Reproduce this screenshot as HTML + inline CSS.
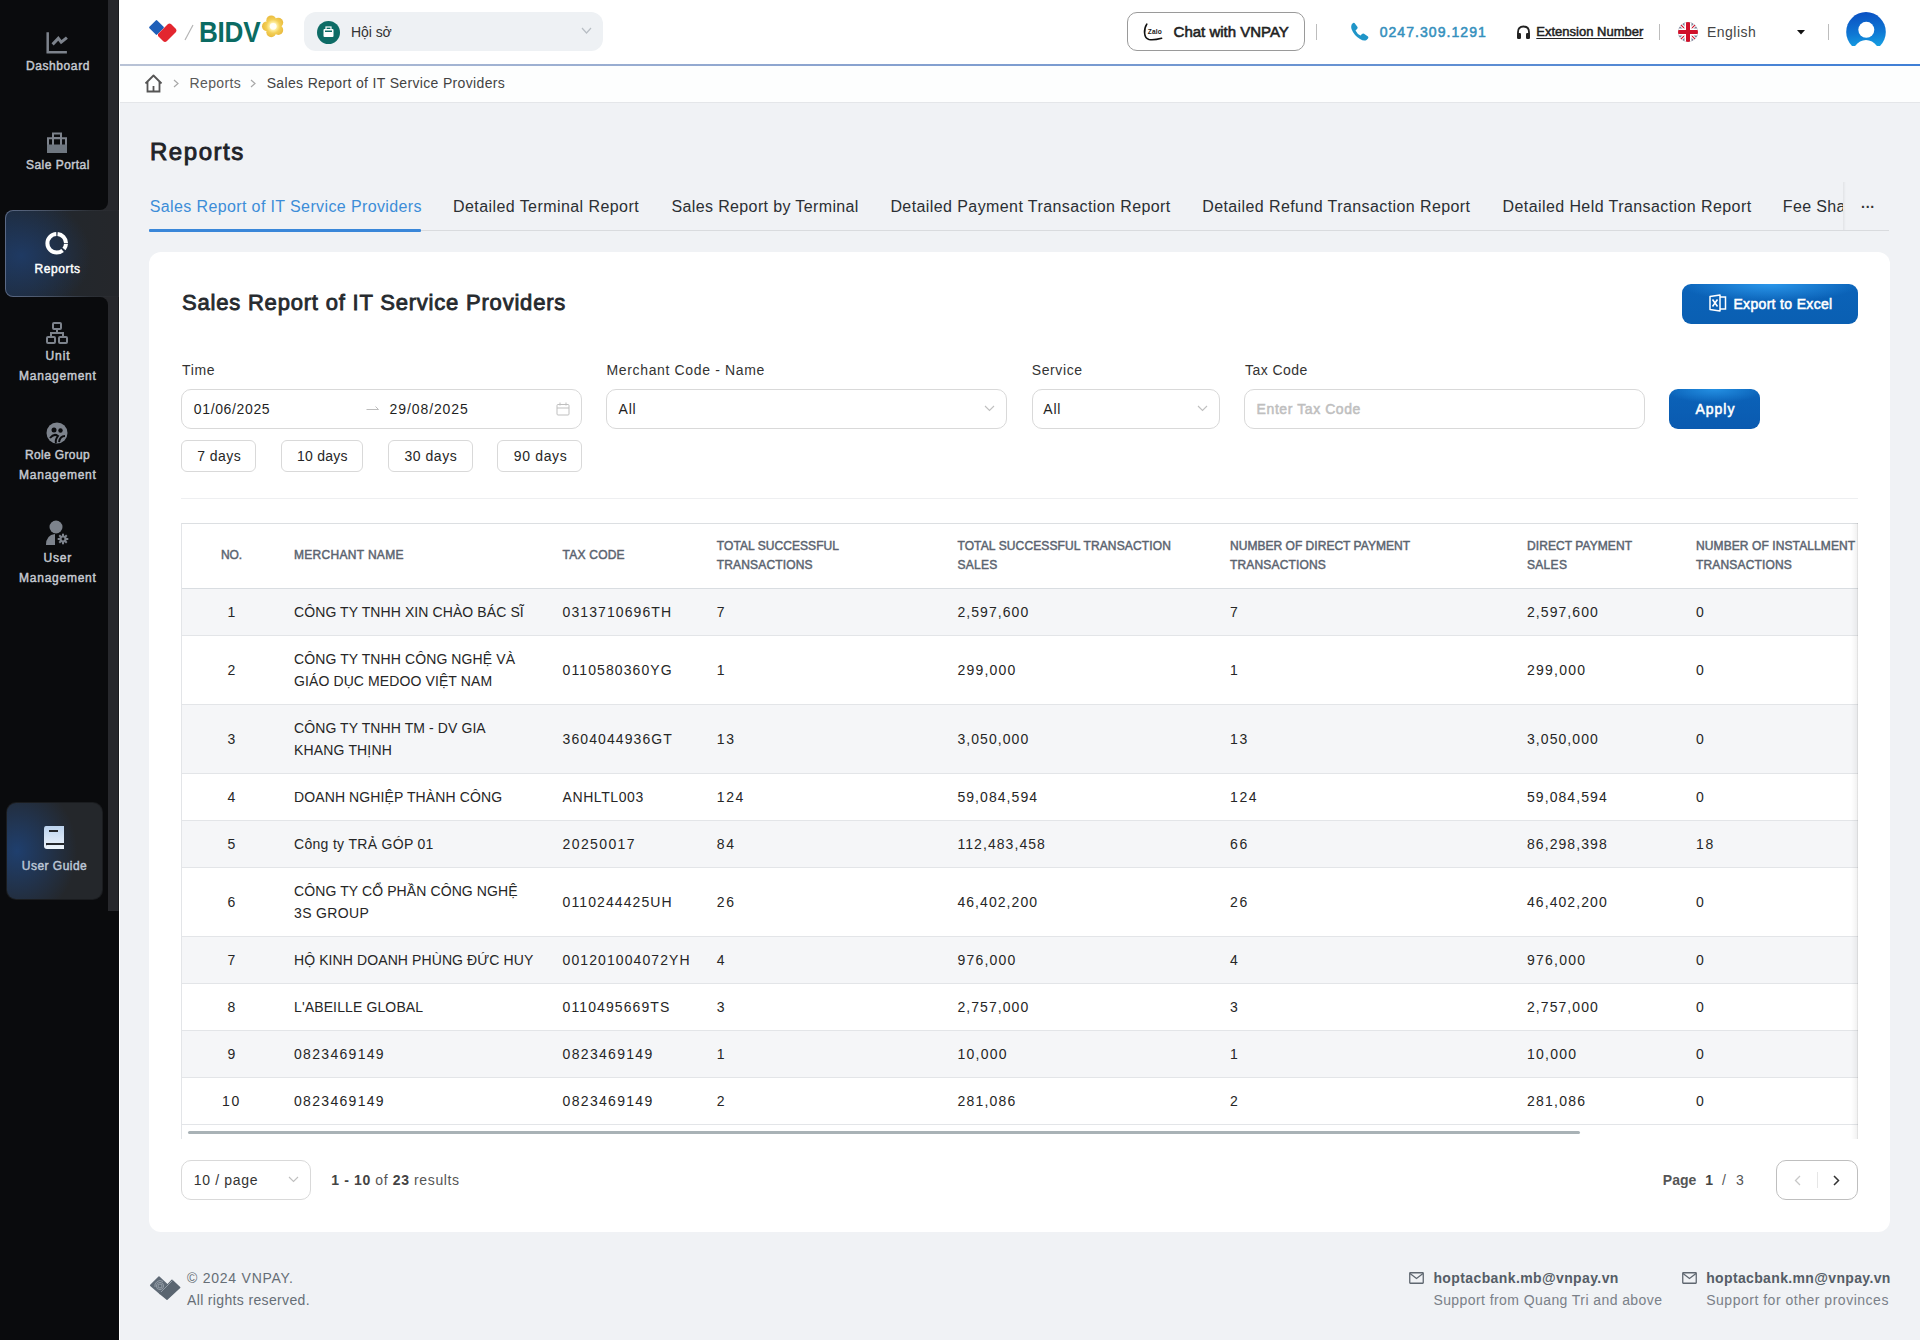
<!DOCTYPE html>
<html><head><meta charset="utf-8"><title>Sales Report of IT Service Providers</title>
<style>
html,body{margin:0;padding:0;overflow:hidden;}
body{width:1920px;height:1340px;position:relative;overflow:hidden;font-family:"Liberation Sans", sans-serif;background:#f0f2f5;}
.t{position:absolute;white-space:nowrap;}
svg{overflow:visible;}
</style></head><body>
<div style="position:absolute;left:0px;top:0px;width:1920px;height:1340px;background:#f0f2f5;"></div>
<div style="position:absolute;left:119px;top:0px;width:1801px;height:64px;background:#ffffff;"></div>
<div style="position:absolute;left:119px;top:64px;width:1801px;height:2px;background:linear-gradient(90deg,#b9c3d6 0%,#8aa3cf 40%,#3f7fd6 100%);"></div>
<div style="position:absolute;left:119px;top:66px;width:1801px;height:36px;background:#fdfefe;"></div>
<div style="position:absolute;left:119px;top:102px;width:1801px;height:1px;background:#e4e6e9;"></div>
<div style="position:absolute;left:119px;top:0px;width:1px;height:1340px;background:#ffffff;"></div>
<div style="position:absolute;left:0px;top:0px;width:119px;height:1340px;background:#0a0b0d;"></div>
<div style="position:absolute;left:0px;top:0px;width:119px;height:911px;background:#27282c;"></div>
<div style="position:absolute;left:118px;top:0px;width:1px;height:911px;background:#1b1c1f;"></div>
<div style="position:absolute;left:0px;top:0px;width:108px;height:210px;background:#0a0b0d;border-bottom-right-radius:8px;"></div>
<div style="position:absolute;left:0px;top:297px;width:108px;height:614px;background:#0a0b0d;border-top-right-radius:8px;border-bottom-right-radius:0;"></div>
<div style="position:absolute;left:0px;top:205px;width:40px;height:97px;background:#0a0b0d;"></div>
<div style="position:absolute;left:5px;top:210px;width:114px;height:87px;border-radius:8px 0 0 8px;background:linear-gradient(90deg,#5a6986 0%,#4a5568 35%,#2c3036 75%,#27282c 100%);"></div>
<div style="position:absolute;left:6px;top:211px;width:113px;height:85px;border-radius:7px 0 0 7px;background:radial-gradient(ellipse 70px 60px at 15px 45px,#1f3a63 0%,rgba(31,58,99,0) 100%),linear-gradient(90deg,#1e2a3a 0%,#23272c 60%,#25272b 100%);"></div>
<div style="position:absolute;left:7px;top:803px;width:95px;height:96px;border-radius:9px;background:radial-gradient(ellipse 60px 70px at 10px 48px,#1f3f6e 0%,rgba(31,63,110,0) 100%),#24272b;box-shadow:0 0 0 1px #1a1c1f;"></div>
<svg style="position:absolute;left:46px;top:32px" width="24" height="22" viewBox="0 0 24 22"><path d="M1.7 0.3 V20.2 H20.9" stroke="#7d838c" stroke-width="2.5" fill="none"/><path d="M6.6 12.4 L12.3 6.4 L15.2 10.2 L20.9 5.6" stroke="#7d838c" stroke-width="3" fill="none" stroke-linejoin="miter"/></svg>
<div class="t" style="left:26px;top:57.90px;font-size:12px;line-height:17px;font-weight:400;color:#c5c9d0;-webkit-text-stroke:0.46px #c5c9d0;letter-spacing:0.585px;">Dashboard</div>
<svg style="position:absolute;left:46px;top:132px" width="22" height="22" viewBox="0 0 22 22"><rect x="7" y="1.5" width="8" height="4.5" fill="none" stroke="#7d838c" stroke-width="2"/><path d="M2 13 V6.2 H20 V13" fill="none" stroke="#7d838c" stroke-width="2"/><path d="M7 6 V13 M15 6 V13" stroke="#7d838c" stroke-width="2"/><rect x="1" y="12.5" width="20" height="8.5" fill="#6f7780"/></svg>
<div class="t" style="left:26px;top:157.10px;font-size:12px;line-height:17px;font-weight:400;color:#c5c9d0;-webkit-text-stroke:0.46px #c5c9d0;letter-spacing:0.470px;">Sale Portal</div>
<svg style="position:absolute;left:45px;top:231px" width="25" height="25" viewBox="0 0 25 25"><circle cx="11.7" cy="12.3" r="9.3" fill="none" stroke="#ffffff" stroke-width="4" stroke-dasharray="5.7 1.95 35 1.3 13.3 1.13" stroke-dashoffset="-0.49"/></svg>
<div class="t" style="left:34.6px;top:260.90px;font-size:12px;line-height:17px;font-weight:400;color:#ffffff;-webkit-text-stroke:0.46px #ffffff;letter-spacing:0.578px;">Reports</div>
<svg style="position:absolute;left:46px;top:322px" width="22" height="22" viewBox="0 0 22 22"><rect x="7" y="1" width="8" height="6" rx="1" fill="none" stroke="#7d838c" stroke-width="2"/><rect x="1" y="15" width="8" height="6" rx="1" fill="none" stroke="#7d838c" stroke-width="2"/><rect x="13" y="15" width="8" height="6" rx="1" fill="none" stroke="#7d838c" stroke-width="2"/><path d="M11 7 V11 M5 15 V11 H17 V15" stroke="#7d838c" stroke-width="2" fill="none"/></svg>
<div class="t" style="left:45.4px;top:348.10px;font-size:12px;line-height:17px;font-weight:400;color:#c5c9d0;-webkit-text-stroke:0.46px #c5c9d0;letter-spacing:0.952px;">Unit</div>
<div class="t" style="left:19.1px;top:368.10px;font-size:12px;line-height:17px;font-weight:400;color:#c5c9d0;-webkit-text-stroke:0.46px #c5c9d0;letter-spacing:0.739px;">Management</div>
<svg style="position:absolute;left:46px;top:422px" width="22" height="22" viewBox="0 0 22 22"><circle cx="11" cy="11" r="10.5" fill="#7d838c"/><circle cx="8" cy="8" r="2.5" fill="#0a0b0d"/><circle cx="14.5" cy="8.5" r="2.2" fill="#0a0b0d"/><path d="M4 16 Q8 11 12 14 Q9 18 10 21" stroke="#0a0b0d" stroke-width="2" fill="none"/><path d="M13 20 Q14 14 19 14" stroke="#0a0b0d" stroke-width="2" fill="none"/></svg>
<div class="t" style="left:25px;top:447.30px;font-size:12px;line-height:17px;font-weight:400;color:#c5c9d0;-webkit-text-stroke:0.46px #c5c9d0;letter-spacing:0.358px;">Role Group</div>
<div class="t" style="left:19.1px;top:467.30px;font-size:12px;line-height:17px;font-weight:400;color:#c5c9d0;-webkit-text-stroke:0.46px #c5c9d0;letter-spacing:0.739px;">Management</div>
<svg style="position:absolute;left:46px;top:520px" width="23" height="25" viewBox="0 0 23 25"><circle cx="10" cy="7" r="6.5" fill="#7d838c"/><path d="M0 25 Q0 15 9 14 L9 25 Z" fill="#7d838c"/><g transform="translate(17 19)"><circle r="3.6" fill="#7d838c"/><g fill="#7d838c"><rect x="-1" y="-5.3" width="2" height="10.6"/><rect x="-1" y="-5.3" width="2" height="10.6" transform="rotate(45)"/><rect x="-1" y="-5.3" width="2" height="10.6" transform="rotate(90)"/><rect x="-1" y="-5.3" width="2" height="10.6" transform="rotate(135)"/></g><circle r="1.4" fill="#0a0b0d"/></g></svg>
<div class="t" style="left:43.5px;top:549.80px;font-size:12px;line-height:17px;font-weight:400;color:#c5c9d0;-webkit-text-stroke:0.46px #c5c9d0;letter-spacing:0.785px;">User</div>
<div class="t" style="left:19.1px;top:570.10px;font-size:12px;line-height:17px;font-weight:400;color:#c5c9d0;-webkit-text-stroke:0.46px #c5c9d0;letter-spacing:0.739px;">Management</div>
<svg style="position:absolute;left:43px;top:825px" width="22" height="25" viewBox="0 0 22 25"><defs><linearGradient id="bk" x1="0" y1="0" x2="0" y2="1"><stop offset="0" stop-color="#bcd3ee"/><stop offset="1" stop-color="#eef4fb"/></linearGradient></defs><path d="M3 1 H21 V24 H4 Q1 24 1 21 V4 Q1 1 3 1 Z" fill="url(#bk)"/><rect x="6" y="5" width="9" height="2" fill="#24272b"/><path d="M3 18 H21 V20 H4 Q3 20 3 21" fill="#24272b"/></svg>
<div class="t" style="left:21.8px;top:858.00px;font-size:12px;line-height:17px;font-weight:400;color:#bcc6d6;-webkit-text-stroke:0.46px #bcc6d6;letter-spacing:0.477px;">User Guide</div>
<svg style="position:absolute;left:148px;top:19px" width="30" height="25" viewBox="0 0 30 25"><rect x="3" y="3" width="11" height="11" transform="rotate(45 8.5 8.5)" fill="#1f5fb8" rx="1"/><path d="M10 15 L20 5 Q21.5 4 23 5 L28 10 Q29 11.5 28 13 L19 22 Q17 24 15 22 L10 17 Z" fill="#e3262f"/></svg>
<svg style="position:absolute;left:184px;top:25px" width="10" height="15" viewBox="0 0 10 15"><path d="M9 0 L1 15" stroke="#b5b5b5" stroke-width="1.2"/></svg>
<div class="t" style="left:199px;top:16.5px;font-size:29px;line-height:30px;font-weight:700;color:#0b6b63;transform:scaleX(0.9);transform-origin:0 0;letter-spacing:-0.3px;">BIDV</div>
<svg style="position:absolute;left:258px;top:12px" width="30" height="30" viewBox="0 0 30 30"><defs><radialGradient id="fl" gradientUnits="userSpaceOnUse" cx="15.2" cy="14.3" r="11.5"><stop offset="0.3" stop-color="#fff1a8"/><stop offset="0.6" stop-color="#f3cf55"/><stop offset="1" stop-color="#e8b83c"/></radialGradient></defs><g fill="url(#fl)"><circle cx="8.90" cy="14.30" r="4.9"/><circle cx="13.25" cy="8.31" r="4.9"/><circle cx="20.30" cy="10.60" r="4.9"/><circle cx="20.30" cy="18.00" r="4.9"/><circle cx="13.25" cy="20.29" r="4.9"/></g><circle cx="15.2" cy="14.3" r="3.4" fill="#fffef6"/></svg>
<div style="position:absolute;left:304px;top:12px;width:299px;height:39px;background:#eef1f4;border-radius:12px;"></div>
<svg style="position:absolute;left:317px;top:21px" width="23" height="23" viewBox="0 0 23 23"><circle cx="11.5" cy="11.5" r="11.5" fill="#0e6c66"/><rect x="6.5" y="8" width="10" height="8" rx="1" fill="#fff"/><rect x="9" y="6" width="5" height="3" fill="none" stroke="#fff" stroke-width="1.2"/><rect x="8" y="9.5" width="7" height="1.5" fill="#0e6c66"/></svg>
<div class="t" style="left:351px;top:22.00px;font-size:14px;line-height:20px;font-weight:400;color:#333333;letter-spacing:-0.056px;">Hội sở</div>
<svg style="position:absolute;left:581px;top:27px" width="11" height="7" viewBox="0 0 11 7"><path d="M1 1 L5.5 6 L10 1" stroke="#b8bec4" stroke-width="1.2" fill="none"/></svg>
<div style="position:absolute;left:1127px;top:12px;width:178px;height:39px;box-sizing:border-box;border:1px solid #9a9a9a;border-radius:10px;background:#fff;"></div>
<svg style="position:absolute;left:1143px;top:23px" width="20" height="20" viewBox="0 0 20 20"><path d="M3.8 1.1 Q1.2 5 1.6 10 Q2 15.5 6 16.5 Q11 17.3 18.6 15.2" stroke="#111" stroke-width="1.6" fill="none" stroke-linecap="round"/><text x="4.8" y="10.8" font-size="6.6" font-family="Liberation Sans" font-weight="700" fill="#1a1a1a" letter-spacing="0.15">Zalo</text></svg>
<div class="t" style="left:1173.6px;top:21.30px;font-size:15px;line-height:21px;font-weight:400;color:#222222;-webkit-text-stroke:0.57px #222222;letter-spacing:-0.009px;">Chat with VNPAY</div>
<div style="position:absolute;left:1316px;top:24px;width:1px;height:16px;background:#bdbdbd;"></div>
<svg style="position:absolute;left:1350px;top:22px" width="19" height="19" viewBox="0 0 19 19"><path d="M4.5 1 L7.5 5 Q8 6 7 7 L5.5 8.5 Q7.5 12.5 10.5 13.5 L12 12 Q13 11 14 11.8 L18 14.5 Q18.8 15.5 18 16.5 L16.5 18 Q14 19.5 10 17 Q4 13.5 1.5 7 Q0.5 3.5 2.5 1.5 Q3.5 0.5 4.5 1 Z" fill="#1f95c8"/></svg>
<div class="t" style="left:1379.7px;top:21.70px;font-size:14px;line-height:20px;font-weight:400;color:#3590bd;-webkit-text-stroke:0.53px #3590bd;letter-spacing:1.055px;">0247.309.1291</div>
<svg style="position:absolute;left:1516px;top:25px" width="15" height="14" viewBox="0 0 15 14"><path d="M2 9 V7 Q2 1.5 7.5 1.5 Q13 1.5 13 7 V9" stroke="#222" stroke-width="1.8" fill="none"/><rect x="1" y="8" width="4" height="6" rx="1.2" fill="#222"/><rect x="10" y="8" width="4" height="6" rx="1.2" fill="#222"/></svg>
<div class="t" style="left:1536.3px;top:22.90px;font-size:13px;line-height:18px;font-weight:400;color:#222222;-webkit-text-stroke:0.49px #222222;letter-spacing:0.003px;text-decoration:underline;text-underline-offset:2px;">Extension Number</div>
<div style="position:absolute;left:1659px;top:24px;width:1px;height:16px;background:#bdbdbd;"></div>
<svg style="position:absolute;left:1678px;top:22px" width="21" height="20" viewBox="0 0 21 20"><defs><clipPath id="fc"><circle cx="10" cy="10" r="10"/></clipPath></defs><g clip-path="url(#fc)"><rect width="20" height="20" fill="#7c8196"/><path d="M0 0 L20 20 M20 0 L0 20" stroke="#fff" stroke-width="3.2"/><path d="M0 0 L20 20 M20 0 L0 20" stroke="#d0102a" stroke-width="1.1"/><rect x="6.5" y="0" width="7" height="20" fill="#fff"/><rect x="0" y="6.5" width="20" height="7" fill="#fff"/><rect x="8" y="0" width="4" height="20" fill="#d0102a"/><rect x="0" y="8" width="20" height="4" fill="#d0102a"/></g></svg>
<div class="t" style="left:1707px;top:22.00px;font-size:14px;line-height:20px;font-weight:400;color:#444444;letter-spacing:0.480px;">English</div>
<svg style="position:absolute;left:1797px;top:30px" width="8" height="5" viewBox="0 0 8 5"><path d="M0 0 H8 L4 4.5 Z" fill="#111"/></svg>
<div style="position:absolute;left:1828px;top:24px;width:1px;height:16px;background:#bdbdbd;"></div>
<svg style="position:absolute;left:1845px;top:11px" width="42" height="36" viewBox="0 0 42 36"><defs><linearGradient id="av" x1="0.3" y1="0" x2="0.4" y2="1"><stop offset="0" stop-color="#0a4fc2"/><stop offset="0.55" stop-color="#0f78d4"/><stop offset="1" stop-color="#18abe6"/></linearGradient><clipPath id="avc"><rect x="0" y="0" width="42" height="35"/></clipPath></defs><g clip-path="url(#avc)"><circle cx="21" cy="20.9" r="19.8" fill="url(#av)"/><circle cx="21.3" cy="18.8" r="8" fill="#fff"/><ellipse cx="21" cy="49.5" rx="15.5" ry="20.5" fill="#fff"/></g></svg>
<svg style="position:absolute;left:144px;top:74px" width="19" height="19" viewBox="0 0 19 19"><path d="M1.5 9.5 L9.5 1.5 L17.5 9.5" stroke="#555" stroke-width="1.8" fill="none" stroke-linejoin="round"/><path d="M3.5 8 V17.5 H15.5 V8" stroke="#555" stroke-width="1.8" fill="none"/><path d="M9.5 12 V17" stroke="#555" stroke-width="1.8"/></svg>
<svg style="position:absolute;left:173px;top:79px" width="6" height="9" viewBox="0 0 6 9"><path d="M1 1 L5 4.5 L1 8" stroke="#a8a8a8" stroke-width="1.2" fill="none"/></svg>
<div class="t" style="left:189.5px;top:73.10px;font-size:14px;line-height:20px;font-weight:400;color:#595959;letter-spacing:0.378px;">Reports</div>
<svg style="position:absolute;left:250px;top:79px" width="6" height="9" viewBox="0 0 6 9"><path d="M1 1 L5 4.5 L1 8" stroke="#a8a8a8" stroke-width="1.2" fill="none"/></svg>
<div class="t" style="left:266.7px;top:73.10px;font-size:14px;line-height:20px;font-weight:400;color:#434343;letter-spacing:0.341px;">Sales Report of IT Service Providers</div>
<div class="t" style="left:150px;top:136.00px;font-size:24px;line-height:32px;font-weight:400;color:#1f2328;-webkit-text-stroke:0.91px #1f2328;letter-spacing:1.542px;">Reports</div>
<div style="position:absolute;left:149px;top:230px;width:1740px;height:1px;background:#d9dbde;"></div>
<div style="position:absolute;left:149px;top:229px;width:272px;height:3px;background:#3a87d9;border-radius:1px;"></div>
<div class="t" style="left:149.7px;top:195.80px;font-size:16px;line-height:22px;font-weight:400;color:#3c8dd8;letter-spacing:0.383px;">Sales Report of IT Service Providers</div>
<div class="t" style="left:453px;top:195.80px;font-size:16px;line-height:22px;font-weight:400;color:#2b2f33;letter-spacing:0.426px;">Detailed Terminal Report</div>
<div class="t" style="left:671.5px;top:195.80px;font-size:16px;line-height:22px;font-weight:400;color:#2b2f33;letter-spacing:0.367px;">Sales Report by Terminal</div>
<div class="t" style="left:890.4px;top:195.80px;font-size:16px;line-height:22px;font-weight:400;color:#2b2f33;letter-spacing:0.411px;">Detailed Payment Transaction Report</div>
<div class="t" style="left:1202.2px;top:195.80px;font-size:16px;line-height:22px;font-weight:400;color:#2b2f33;letter-spacing:0.407px;">Detailed Refund Transaction Report</div>
<div class="t" style="left:1502.5px;top:195.80px;font-size:16px;line-height:22px;font-weight:400;color:#2b2f33;letter-spacing:0.417px;">Detailed Held Transaction Report</div>
<div style="position:absolute;left:1782.8px;top:194px;width:60px;height:24px;overflow:hidden;">
<div class="t" style="left:0px;top:1.80px;font-size:16px;line-height:22px;font-weight:400;color:#2b2f33;white-space:nowrap;letter-spacing:0.36px;">Fee Sharing Report</div>
</div>
<div style="position:absolute;left:1843px;top:182px;width:3px;height:48px;background:linear-gradient(90deg,rgba(0,0,0,0.06),rgba(0,0,0,0));"></div>
<div class="t" style="left:1861px;top:197.00px;font-size:14px;line-height:20px;font-weight:700;color:#333;letter-spacing:0px;">···</div>
<div style="position:absolute;left:149px;top:252px;width:1741px;height:980px;background:#ffffff;border-radius:12px;"></div>
<div class="t" style="left:182px;top:287.70px;font-size:22px;line-height:30px;font-weight:400;color:#262a2e;-webkit-text-stroke:0.84px #262a2e;letter-spacing:0.797px;">Sales Report of IT Service Providers</div>
<div style="position:absolute;left:1682px;top:284px;width:176px;height:40px;border-radius:9px;background:radial-gradient(ellipse 90px 18px at 50% 0%,#2a96ea 0%,rgba(42,150,234,0) 100%),linear-gradient(180deg,#0b63b9,#0a5fb2);"></div>
<svg style="position:absolute;left:1709px;top:294px" width="18" height="18" viewBox="0 0 18 18"><path d="M1 2.5 L11 1 V17 L1 15.5 Z" fill="none" stroke="#fff" stroke-width="1.5" stroke-linejoin="round"/><path d="M11 3 H16.5 V15 H11" fill="none" stroke="#fff" stroke-width="1.5"/><path d="M3.5 5.5 L8.5 12.5 M8.5 5.5 L3.5 12.5" stroke="#fff" stroke-width="1.6"/></svg>
<div class="t" style="left:1733.4px;top:293.50px;font-size:14px;line-height:20px;font-weight:400;color:#ffffff;-webkit-text-stroke:0.53px #ffffff;letter-spacing:0.332px;">Export to Excel</div>
<div class="t" style="left:182px;top:360.00px;font-size:14px;line-height:20px;font-weight:400;color:#333333;letter-spacing:0.635px;">Time</div>
<div class="t" style="left:606.5px;top:360.00px;font-size:14px;line-height:20px;font-weight:400;color:#333333;letter-spacing:0.647px;">Merchant Code - Name</div>
<div class="t" style="left:1031.7px;top:360.00px;font-size:14px;line-height:20px;font-weight:400;color:#333333;letter-spacing:0.619px;">Service</div>
<div class="t" style="left:1245px;top:360.00px;font-size:14px;line-height:20px;font-weight:400;color:#333333;letter-spacing:0.463px;">Tax Code</div>
<div style="position:absolute;left:181px;top:389px;width:401px;height:40px;box-sizing:border-box;border:1px solid #d9d9d9;border-radius:10px;background:#fff;"></div>
<div class="t" style="left:193.8px;top:399.20px;font-size:14px;line-height:20px;font-weight:400;color:#1f1f1f;letter-spacing:0.636px;">01/06/2025</div>
<svg style="position:absolute;left:366px;top:405px" width="14" height="8" viewBox="0 0 14 8"><path d="M0.5 4.5 H12.5 M9.5 1.5 L12.5 4.5" stroke="#bdbdbd" stroke-width="1" fill="none"/></svg>
<div class="t" style="left:389.6px;top:399.20px;font-size:14px;line-height:20px;font-weight:400;color:#1f1f1f;letter-spacing:0.902px;">29/08/2025</div>
<svg style="position:absolute;left:556px;top:402px" width="14" height="14" viewBox="0 0 14 14"><rect x="1" y="2.5" width="12" height="10.5" rx="1" fill="none" stroke="#bfbfbf" stroke-width="1"/><path d="M1 6 H13 M4 0.5 V3.5 M10 0.5 V3.5" stroke="#bfbfbf" stroke-width="1"/></svg>
<div style="position:absolute;left:606px;top:389px;width:401px;height:40px;box-sizing:border-box;border:1px solid #d9d9d9;border-radius:10px;background:#fff;"></div>
<div class="t" style="left:618.6px;top:399.20px;font-size:14px;line-height:20px;font-weight:400;color:#1f1f1f;letter-spacing:0.790px;">All</div>
<svg style="position:absolute;left:984px;top:405px" width="11" height="7" viewBox="0 0 11 7"><path d="M1 1 L5.5 5.5 L10 1" stroke="#bfbfbf" stroke-width="1.1" fill="none"/></svg>
<div style="position:absolute;left:1032px;top:389px;width:188px;height:40px;box-sizing:border-box;border:1px solid #d9d9d9;border-radius:10px;background:#fff;"></div>
<div class="t" style="left:1043.3px;top:399.20px;font-size:14px;line-height:20px;font-weight:400;color:#1f1f1f;letter-spacing:0.790px;">All</div>
<svg style="position:absolute;left:1197px;top:405px" width="11" height="7" viewBox="0 0 11 7"><path d="M1 1 L5.5 5.5 L10 1" stroke="#bfbfbf" stroke-width="1.1" fill="none"/></svg>
<div style="position:absolute;left:1244px;top:389px;width:401px;height:40px;box-sizing:border-box;border:1px solid #d9d9d9;border-radius:10px;background:#fff;"></div>
<div class="t" style="left:1256.6px;top:399.20px;font-size:14px;line-height:20px;font-weight:400;color:#bfbfbf;-webkit-text-stroke:0.53px #bfbfbf;letter-spacing:0.581px;">Enter Tax Code</div>
<div style="position:absolute;left:1669px;top:389px;width:91px;height:40px;border-radius:9px;background:radial-gradient(ellipse 50px 14px at 50% 0%,#2490e3 0%,rgba(36,144,227,0) 100%),linear-gradient(180deg,#0b63b9,#0a5ab0);"></div>
<div class="t" style="left:1695.6px;top:399.00px;font-size:14px;line-height:20px;font-weight:400;color:#ffffff;-webkit-text-stroke:0.53px #ffffff;letter-spacing:0.942px;">Apply</div>
<div style="position:absolute;left:181px;top:440px;width:75px;height:32px;box-sizing:border-box;border:1px solid #d9d9d9;border-radius:6px;background:#fff;"></div>
<div class="t" style="left:197.3px;top:446.00px;font-size:14px;line-height:20px;font-weight:400;color:#262626;letter-spacing:0.450px;">7 days</div>
<div style="position:absolute;left:281px;top:440px;width:82px;height:32px;box-sizing:border-box;border:1px solid #d9d9d9;border-radius:6px;background:#fff;"></div>
<div class="t" style="left:297.1px;top:446.00px;font-size:14px;line-height:20px;font-weight:400;color:#262626;letter-spacing:0.209px;">10 days</div>
<div style="position:absolute;left:388px;top:440px;width:85px;height:32px;box-sizing:border-box;border:1px solid #d9d9d9;border-radius:6px;background:#fff;"></div>
<div class="t" style="left:404.4px;top:446.00px;font-size:14px;line-height:20px;font-weight:400;color:#262626;letter-spacing:0.559px;">30 days</div>
<div style="position:absolute;left:497px;top:440px;width:85px;height:32px;box-sizing:border-box;border:1px solid #d9d9d9;border-radius:6px;background:#fff;"></div>
<div class="t" style="left:513.7px;top:446.00px;font-size:14px;line-height:20px;font-weight:400;color:#262626;letter-spacing:0.676px;">90 days</div>
<div style="position:absolute;left:181px;top:498px;width:1677px;height:1px;background:#eeeff1;"></div>
<div style="position:absolute;left:181px;top:523px;width:1677px;height:616px;box-sizing:border-box;border-left:1px solid #e3e5e8;border-top:1px solid #dcdfe2;background:#fff;"></div>
<div style="position:absolute;left:182px;top:588px;width:1676px;height:1px;background:#d9dde1;"></div>
<div class="t" style="left:231.5px;top:546.50px;font-size:12px;line-height:17px;font-weight:400;color:#5b6470;-webkit-text-stroke:0.46px #5b6470;transform:translateX(-50%);letter-spacing:-0.122px;">NO.</div>
<div class="t" style="left:294px;top:546.50px;font-size:12px;line-height:17px;font-weight:400;color:#5b6470;-webkit-text-stroke:0.46px #5b6470;letter-spacing:0.309px;">MERCHANT NAME</div>
<div class="t" style="left:562.6px;top:546.50px;font-size:12px;line-height:17px;font-weight:400;color:#5b6470;-webkit-text-stroke:0.46px #5b6470;letter-spacing:0.221px;">TAX CODE</div>
<div class="t" style="left:716.8px;top:538.10px;font-size:12px;line-height:17px;font-weight:400;color:#5b6470;-webkit-text-stroke:0.46px #5b6470;letter-spacing:0.071px;">TOTAL SUCCESSFUL</div>
<div class="t" style="left:716.8px;top:557.10px;font-size:12px;line-height:17px;font-weight:400;color:#5b6470;-webkit-text-stroke:0.46px #5b6470;letter-spacing:0.160px;">TRANSACTIONS</div>
<div class="t" style="left:957.4px;top:538.10px;font-size:12px;line-height:17px;font-weight:400;color:#5b6470;-webkit-text-stroke:0.46px #5b6470;letter-spacing:0.133px;">TOTAL SUCCESSFUL TRANSACTION</div>
<div class="t" style="left:957.4px;top:557.10px;font-size:12px;line-height:17px;font-weight:400;color:#5b6470;-webkit-text-stroke:0.46px #5b6470;letter-spacing:0.300px;">SALES</div>
<div class="t" style="left:1230px;top:538.10px;font-size:12px;line-height:17px;font-weight:400;color:#5b6470;-webkit-text-stroke:0.46px #5b6470;letter-spacing:0.029px;">NUMBER OF DIRECT PAYMENT</div>
<div class="t" style="left:1230px;top:557.10px;font-size:12px;line-height:17px;font-weight:400;color:#5b6470;-webkit-text-stroke:0.46px #5b6470;letter-spacing:0.160px;">TRANSACTIONS</div>
<div class="t" style="left:1527px;top:538.10px;font-size:12px;line-height:17px;font-weight:400;color:#5b6470;-webkit-text-stroke:0.46px #5b6470;letter-spacing:0.076px;">DIRECT PAYMENT</div>
<div class="t" style="left:1527px;top:557.10px;font-size:12px;line-height:17px;font-weight:400;color:#5b6470;-webkit-text-stroke:0.46px #5b6470;letter-spacing:0.300px;">SALES</div>
<div class="t" style="left:1696px;top:538.10px;font-size:12px;line-height:17px;font-weight:400;color:#5b6470;-webkit-text-stroke:0.46px #5b6470;letter-spacing:0.099px;">NUMBER OF INSTALLMENT</div>
<div class="t" style="left:1696px;top:557.10px;font-size:12px;line-height:17px;font-weight:400;color:#5b6470;-webkit-text-stroke:0.46px #5b6470;letter-spacing:0.160px;">TRANSACTIONS</div>
<div style="position:absolute;left:182px;top:589px;width:1676px;height:46px;background:#f5f6f8;"></div>
<div style="position:absolute;left:182px;top:635px;width:1676px;height:1px;background:#e3e5e8;"></div>
<div class="t" style="left:231.5px;top:601.50px;font-size:14px;line-height:20px;font-weight:400;color:#262626;transform:translateX(-50%);">1</div>
<div class="t" style="left:294px;top:601.50px;font-size:14px;line-height:20px;font-weight:400;color:#262626;letter-spacing:0.095px;">CÔNG TY TNHH XIN CHÀO BÁC SĨ</div>
<div class="t" style="left:562.6px;top:601.50px;font-size:14px;line-height:20px;font-weight:400;color:#262626;letter-spacing:1.087px;">0313710696TH</div>
<div class="t" style="left:716.8px;top:601.50px;font-size:14px;line-height:20px;font-weight:400;color:#262626;">7</div>
<div class="t" style="left:957.4px;top:601.50px;font-size:14px;line-height:20px;font-weight:400;color:#262626;letter-spacing:1.063px;">2,597,600</div>
<div class="t" style="left:1230px;top:601.50px;font-size:14px;line-height:20px;font-weight:400;color:#262626;">7</div>
<div class="t" style="left:1527px;top:601.50px;font-size:14px;line-height:20px;font-weight:400;color:#262626;letter-spacing:1.063px;">2,597,600</div>
<div class="t" style="left:1696px;top:601.50px;font-size:14px;line-height:20px;font-weight:400;color:#262626;">0</div>
<div style="position:absolute;left:182px;top:704px;width:1676px;height:1px;background:#e3e5e8;"></div>
<div class="t" style="left:231.5px;top:659.50px;font-size:14px;line-height:20px;font-weight:400;color:#262626;transform:translateX(-50%);">2</div>
<div class="t" style="left:294px;top:648.50px;font-size:14px;line-height:20px;font-weight:400;color:#262626;letter-spacing:0.100px;">CÔNG TY TNHH CÔNG NGHỆ VÀ</div>
<div class="t" style="left:294px;top:670.50px;font-size:14px;line-height:20px;font-weight:400;color:#262626;letter-spacing:0.105px;">GIÁO DỤC MEDOO VIỆT NAM</div>
<div class="t" style="left:562.6px;top:659.50px;font-size:14px;line-height:20px;font-weight:400;color:#262626;letter-spacing:1.087px;">0110580360YG</div>
<div class="t" style="left:716.8px;top:659.50px;font-size:14px;line-height:20px;font-weight:400;color:#262626;">1</div>
<div class="t" style="left:957.4px;top:659.50px;font-size:14px;line-height:20px;font-weight:400;color:#262626;letter-spacing:1.233px;">299,000</div>
<div class="t" style="left:1230px;top:659.50px;font-size:14px;line-height:20px;font-weight:400;color:#262626;">1</div>
<div class="t" style="left:1527px;top:659.50px;font-size:14px;line-height:20px;font-weight:400;color:#262626;letter-spacing:1.233px;">299,000</div>
<div class="t" style="left:1696px;top:659.50px;font-size:14px;line-height:20px;font-weight:400;color:#262626;">0</div>
<div style="position:absolute;left:182px;top:705px;width:1676px;height:68px;background:#f5f6f8;"></div>
<div style="position:absolute;left:182px;top:773px;width:1676px;height:1px;background:#e3e5e8;"></div>
<div class="t" style="left:231.5px;top:728.50px;font-size:14px;line-height:20px;font-weight:400;color:#262626;transform:translateX(-50%);">3</div>
<div class="t" style="left:294px;top:717.50px;font-size:14px;line-height:20px;font-weight:400;color:#262626;letter-spacing:0.094px;">CÔNG TY TNHH TM - DV GIA</div>
<div class="t" style="left:294px;top:739.50px;font-size:14px;line-height:20px;font-weight:400;color:#262626;letter-spacing:0.160px;">KHANG THỊNH</div>
<div class="t" style="left:562.6px;top:728.50px;font-size:14px;line-height:20px;font-weight:400;color:#262626;letter-spacing:1.087px;">3604044936GT</div>
<div class="t" style="left:716.8px;top:728.50px;font-size:14px;line-height:20px;font-weight:400;color:#262626;letter-spacing:1.600px;">13</div>
<div class="t" style="left:957.4px;top:728.50px;font-size:14px;line-height:20px;font-weight:400;color:#262626;letter-spacing:1.063px;">3,050,000</div>
<div class="t" style="left:1230px;top:728.50px;font-size:14px;line-height:20px;font-weight:400;color:#262626;letter-spacing:1.600px;">13</div>
<div class="t" style="left:1527px;top:728.50px;font-size:14px;line-height:20px;font-weight:400;color:#262626;letter-spacing:1.063px;">3,050,000</div>
<div class="t" style="left:1696px;top:728.50px;font-size:14px;line-height:20px;font-weight:400;color:#262626;">0</div>
<div style="position:absolute;left:182px;top:820px;width:1676px;height:1px;background:#e3e5e8;"></div>
<div class="t" style="left:231.5px;top:786.50px;font-size:14px;line-height:20px;font-weight:400;color:#262626;transform:translateX(-50%);">4</div>
<div class="t" style="left:294px;top:786.50px;font-size:14px;line-height:20px;font-weight:400;color:#262626;letter-spacing:0.109px;">DOANH NGHIỆP THÀNH CÔNG</div>
<div class="t" style="left:562.6px;top:786.50px;font-size:14px;line-height:20px;font-weight:400;color:#262626;letter-spacing:0.573px;">ANHLTL003</div>
<div class="t" style="left:716.8px;top:786.50px;font-size:14px;line-height:20px;font-weight:400;color:#262626;letter-spacing:1.600px;">124</div>
<div class="t" style="left:957.4px;top:786.50px;font-size:14px;line-height:20px;font-weight:400;color:#262626;letter-spacing:1.067px;">59,084,594</div>
<div class="t" style="left:1230px;top:786.50px;font-size:14px;line-height:20px;font-weight:400;color:#262626;letter-spacing:1.600px;">124</div>
<div class="t" style="left:1527px;top:786.50px;font-size:14px;line-height:20px;font-weight:400;color:#262626;letter-spacing:1.067px;">59,084,594</div>
<div class="t" style="left:1696px;top:786.50px;font-size:14px;line-height:20px;font-weight:400;color:#262626;">0</div>
<div style="position:absolute;left:182px;top:821px;width:1676px;height:46px;background:#f5f6f8;"></div>
<div style="position:absolute;left:182px;top:867px;width:1676px;height:1px;background:#e3e5e8;"></div>
<div class="t" style="left:231.5px;top:833.50px;font-size:14px;line-height:20px;font-weight:400;color:#262626;transform:translateX(-50%);">5</div>
<div class="t" style="left:294px;top:833.50px;font-size:14px;line-height:20px;font-weight:400;color:#262626;letter-spacing:0.312px;">Công ty TRẢ GÓP 01</div>
<div class="t" style="left:562.6px;top:833.50px;font-size:14px;line-height:20px;font-weight:400;color:#262626;letter-spacing:1.371px;">20250017</div>
<div class="t" style="left:716.8px;top:833.50px;font-size:14px;line-height:20px;font-weight:400;color:#262626;letter-spacing:1.600px;">84</div>
<div class="t" style="left:957.4px;top:833.50px;font-size:14px;line-height:20px;font-weight:400;color:#262626;letter-spacing:1.070px;">112,483,458</div>
<div class="t" style="left:1230px;top:833.50px;font-size:14px;line-height:20px;font-weight:400;color:#262626;letter-spacing:1.600px;">66</div>
<div class="t" style="left:1527px;top:833.50px;font-size:14px;line-height:20px;font-weight:400;color:#262626;letter-spacing:1.067px;">86,298,398</div>
<div class="t" style="left:1696px;top:833.50px;font-size:14px;line-height:20px;font-weight:400;color:#262626;letter-spacing:1.600px;">18</div>
<div style="position:absolute;left:182px;top:936px;width:1676px;height:1px;background:#e3e5e8;"></div>
<div class="t" style="left:231.5px;top:891.50px;font-size:14px;line-height:20px;font-weight:400;color:#262626;transform:translateX(-50%);">6</div>
<div class="t" style="left:294px;top:880.50px;font-size:14px;line-height:20px;font-weight:400;color:#262626;letter-spacing:0.100px;">CÔNG TY CỔ PHẦN CÔNG NGHỆ</div>
<div class="t" style="left:294px;top:902.50px;font-size:14px;line-height:20px;font-weight:400;color:#262626;letter-spacing:0.340px;">3S GROUP</div>
<div class="t" style="left:562.6px;top:891.50px;font-size:14px;line-height:20px;font-weight:400;color:#262626;letter-spacing:1.087px;">0110244425UH</div>
<div class="t" style="left:716.8px;top:891.50px;font-size:14px;line-height:20px;font-weight:400;color:#262626;letter-spacing:1.600px;">26</div>
<div class="t" style="left:957.4px;top:891.50px;font-size:14px;line-height:20px;font-weight:400;color:#262626;letter-spacing:1.067px;">46,402,200</div>
<div class="t" style="left:1230px;top:891.50px;font-size:14px;line-height:20px;font-weight:400;color:#262626;letter-spacing:1.600px;">26</div>
<div class="t" style="left:1527px;top:891.50px;font-size:14px;line-height:20px;font-weight:400;color:#262626;letter-spacing:1.067px;">46,402,200</div>
<div class="t" style="left:1696px;top:891.50px;font-size:14px;line-height:20px;font-weight:400;color:#262626;">0</div>
<div style="position:absolute;left:182px;top:937px;width:1676px;height:46px;background:#f5f6f8;"></div>
<div style="position:absolute;left:182px;top:983px;width:1676px;height:1px;background:#e3e5e8;"></div>
<div class="t" style="left:231.5px;top:949.50px;font-size:14px;line-height:20px;font-weight:400;color:#262626;transform:translateX(-50%);">7</div>
<div class="t" style="left:294px;top:949.50px;font-size:14px;line-height:20px;font-weight:400;color:#262626;letter-spacing:0.098px;">HỘ KINH DOANH PHÙNG ĐỨC HUY</div>
<div class="t" style="left:562.6px;top:949.50px;font-size:14px;line-height:20px;font-weight:400;color:#262626;letter-spacing:1.089px;">001201004072YH</div>
<div class="t" style="left:716.8px;top:949.50px;font-size:14px;line-height:20px;font-weight:400;color:#262626;">4</div>
<div class="t" style="left:957.4px;top:949.50px;font-size:14px;line-height:20px;font-weight:400;color:#262626;letter-spacing:1.233px;">976,000</div>
<div class="t" style="left:1230px;top:949.50px;font-size:14px;line-height:20px;font-weight:400;color:#262626;">4</div>
<div class="t" style="left:1527px;top:949.50px;font-size:14px;line-height:20px;font-weight:400;color:#262626;letter-spacing:1.233px;">976,000</div>
<div class="t" style="left:1696px;top:949.50px;font-size:14px;line-height:20px;font-weight:400;color:#262626;">0</div>
<div style="position:absolute;left:182px;top:1030px;width:1676px;height:1px;background:#e3e5e8;"></div>
<div class="t" style="left:231.5px;top:996.50px;font-size:14px;line-height:20px;font-weight:400;color:#262626;transform:translateX(-50%);">8</div>
<div class="t" style="left:294px;top:996.50px;font-size:14px;line-height:20px;font-weight:400;color:#262626;letter-spacing:0.128px;">L'ABEILLE GLOBAL</div>
<div class="t" style="left:562.6px;top:996.50px;font-size:14px;line-height:20px;font-weight:400;color:#262626;letter-spacing:1.087px;">0110495669TS</div>
<div class="t" style="left:716.8px;top:996.50px;font-size:14px;line-height:20px;font-weight:400;color:#262626;">3</div>
<div class="t" style="left:957.4px;top:996.50px;font-size:14px;line-height:20px;font-weight:400;color:#262626;letter-spacing:1.063px;">2,757,000</div>
<div class="t" style="left:1230px;top:996.50px;font-size:14px;line-height:20px;font-weight:400;color:#262626;">3</div>
<div class="t" style="left:1527px;top:996.50px;font-size:14px;line-height:20px;font-weight:400;color:#262626;letter-spacing:1.063px;">2,757,000</div>
<div class="t" style="left:1696px;top:996.50px;font-size:14px;line-height:20px;font-weight:400;color:#262626;">0</div>
<div style="position:absolute;left:182px;top:1031px;width:1676px;height:46px;background:#f5f6f8;"></div>
<div style="position:absolute;left:182px;top:1077px;width:1676px;height:1px;background:#e3e5e8;"></div>
<div class="t" style="left:231.5px;top:1043.50px;font-size:14px;line-height:20px;font-weight:400;color:#262626;transform:translateX(-50%);">9</div>
<div class="t" style="left:294px;top:1043.50px;font-size:14px;line-height:20px;font-weight:400;color:#262626;letter-spacing:1.311px;">0823469149</div>
<div class="t" style="left:562.6px;top:1043.50px;font-size:14px;line-height:20px;font-weight:400;color:#262626;letter-spacing:1.311px;">0823469149</div>
<div class="t" style="left:716.8px;top:1043.50px;font-size:14px;line-height:20px;font-weight:400;color:#262626;">1</div>
<div class="t" style="left:957.4px;top:1043.50px;font-size:14px;line-height:20px;font-weight:400;color:#262626;letter-spacing:1.260px;">10,000</div>
<div class="t" style="left:1230px;top:1043.50px;font-size:14px;line-height:20px;font-weight:400;color:#262626;">1</div>
<div class="t" style="left:1527px;top:1043.50px;font-size:14px;line-height:20px;font-weight:400;color:#262626;letter-spacing:1.260px;">10,000</div>
<div class="t" style="left:1696px;top:1043.50px;font-size:14px;line-height:20px;font-weight:400;color:#262626;">0</div>
<div style="position:absolute;left:182px;top:1124px;width:1676px;height:1px;background:#e3e5e8;"></div>
<div class="t" style="left:231.5px;top:1090.50px;font-size:14px;line-height:20px;font-weight:400;color:#262626;transform:translateX(-50%);letter-spacing:1.600px;">10</div>
<div class="t" style="left:294px;top:1090.50px;font-size:14px;line-height:20px;font-weight:400;color:#262626;letter-spacing:1.311px;">0823469149</div>
<div class="t" style="left:562.6px;top:1090.50px;font-size:14px;line-height:20px;font-weight:400;color:#262626;letter-spacing:1.311px;">0823469149</div>
<div class="t" style="left:716.8px;top:1090.50px;font-size:14px;line-height:20px;font-weight:400;color:#262626;">2</div>
<div class="t" style="left:957.4px;top:1090.50px;font-size:14px;line-height:20px;font-weight:400;color:#262626;letter-spacing:1.233px;">281,086</div>
<div class="t" style="left:1230px;top:1090.50px;font-size:14px;line-height:20px;font-weight:400;color:#262626;">2</div>
<div class="t" style="left:1527px;top:1090.50px;font-size:14px;line-height:20px;font-weight:400;color:#262626;letter-spacing:1.233px;">281,086</div>
<div class="t" style="left:1696px;top:1090.50px;font-size:14px;line-height:20px;font-weight:400;color:#262626;">0</div>
<div style="position:absolute;left:188px;top:1131px;width:1392px;height:3px;background:#a9b2b6;border-radius:2px;"></div>
<div style="position:absolute;left:1851px;top:523px;width:7px;height:616px;background:linear-gradient(90deg,rgba(0,0,0,0),rgba(0,0,0,0.06));"></div>
<div style="position:absolute;left:1857px;top:523px;width:1px;height:616px;background:rgba(0,0,0,0.06);"></div>
<div style="position:absolute;left:181px;top:1160px;width:130px;height:40px;box-sizing:border-box;border:1px solid #d9d9d9;border-radius:10px;background:#fff;"></div>
<div class="t" style="left:193.7px;top:1170.00px;font-size:14px;line-height:20px;font-weight:400;color:#333333;letter-spacing:0.676px;">10 / page</div>
<svg style="position:absolute;left:288px;top:1176px" width="11" height="7" viewBox="0 0 11 7"><path d="M1 1 L5.5 5.5 L10 1" stroke="#bfbfbf" stroke-width="1.1" fill="none"/></svg>
<div class="t" style="left:331.3px;top:1170px;font-size:14px;line-height:20px;color:#555;letter-spacing:0.62px;" id="pgi"><b style="color:#444">1 - 10</b> of <b style="color:#444">23</b> results</div>
<div class="t" style="left:1662.8px;top:1170px;font-size:14px;line-height:20px;color:#555;" id="pgp"><b>Page</b><b style="color:#444;margin-left:9px">1</b><span style="margin-left:9px">/</span><span style="margin-left:10px">3</span></div>
<div style="position:absolute;left:1776px;top:1160px;width:82px;height:40px;box-sizing:border-box;border:1px solid #bfbfbf;border-radius:10px;background:#fff;"></div>
<svg style="position:absolute;left:1794px;top:1175px" width="7" height="11" viewBox="0 0 7 11"><path d="M6 1 L1.5 5.5 L6 10" stroke="#c8c8c8" stroke-width="1.3" fill="none"/></svg>
<div style="position:absolute;left:1817px;top:1172px;width:1px;height:16px;background:#e6e6e6;"></div>
<svg style="position:absolute;left:1833px;top:1175px" width="7" height="11" viewBox="0 0 7 11"><path d="M1 1 L5.5 5.5 L1 10" stroke="#333" stroke-width="1.5" fill="none"/></svg>
<svg style="position:absolute;left:146px;top:1270px" width="36" height="32" viewBox="0 0 36 32"><path d="M13 7 L21.5 15 L14 23.5 L4.7 15.4 Z" fill="#5f6a76" stroke="#5f6a76" stroke-width="1.5" stroke-linejoin="round"/><path d="M14 23.5 L26 10.2 L33.7 17.5 L21 29.2 Z" fill="#5a6570" stroke="#5a6570" stroke-width="1.5" stroke-linejoin="round"/><path d="M15 22 L26.5 10.5" stroke="#9aa4ae" stroke-width="0.9"/><g fill="none" stroke="#aab3bb" stroke-width="0.7"><circle cx="14" cy="16" r="2"/><circle cx="14" cy="16" r="3.6"/><path d="M9 17 A5.2 5.2 0 0 1 17 11.5"/></g></svg>
<div class="t" style="left:187px;top:1268.00px;font-size:14px;line-height:20px;font-weight:400;color:#666e76;letter-spacing:0.757px;">© 2024 VNPAY.</div>
<div class="t" style="left:187px;top:1289.80px;font-size:14px;line-height:20px;font-weight:400;color:#666e76;letter-spacing:0.351px;">All rights reserved.</div>
<svg style="position:absolute;left:1409px;top:1272px" width="15" height="12" viewBox="0 0 15 12"><rect x="0.75" y="0.75" width="13.5" height="10.5" rx="0.5" fill="none" stroke="#5f6770" stroke-width="1.3"/><path d="M1 1.5 L7.5 6.5 L14 1.5" stroke="#5f6770" stroke-width="1.3" fill="none"/></svg>
<div class="t" style="left:1433.4px;top:1268.00px;font-size:14px;line-height:20px;font-weight:700;color:#555d66;letter-spacing:0.392px;">hoptacbank.mb@vnpay.vn</div>
<div class="t" style="left:1433.4px;top:1290.00px;font-size:14px;line-height:20px;font-weight:400;color:#7a8088;letter-spacing:0.420px;">Support from Quang Tri and above</div>
<svg style="position:absolute;left:1682px;top:1272px" width="15" height="12" viewBox="0 0 15 12"><rect x="0.75" y="0.75" width="13.5" height="10.5" rx="0.5" fill="none" stroke="#5f6770" stroke-width="1.3"/><path d="M1 1.5 L7.5 6.5 L14 1.5" stroke="#5f6770" stroke-width="1.3" fill="none"/></svg>
<div class="t" style="left:1706.2px;top:1268.00px;font-size:14px;line-height:20px;font-weight:700;color:#555d66;letter-spacing:0.354px;">hoptacbank.mn@vnpay.vn</div>
<div class="t" style="left:1706.2px;top:1290.00px;font-size:14px;line-height:20px;font-weight:400;color:#7a8088;letter-spacing:0.513px;">Support for other provinces</div>
</body></html>
